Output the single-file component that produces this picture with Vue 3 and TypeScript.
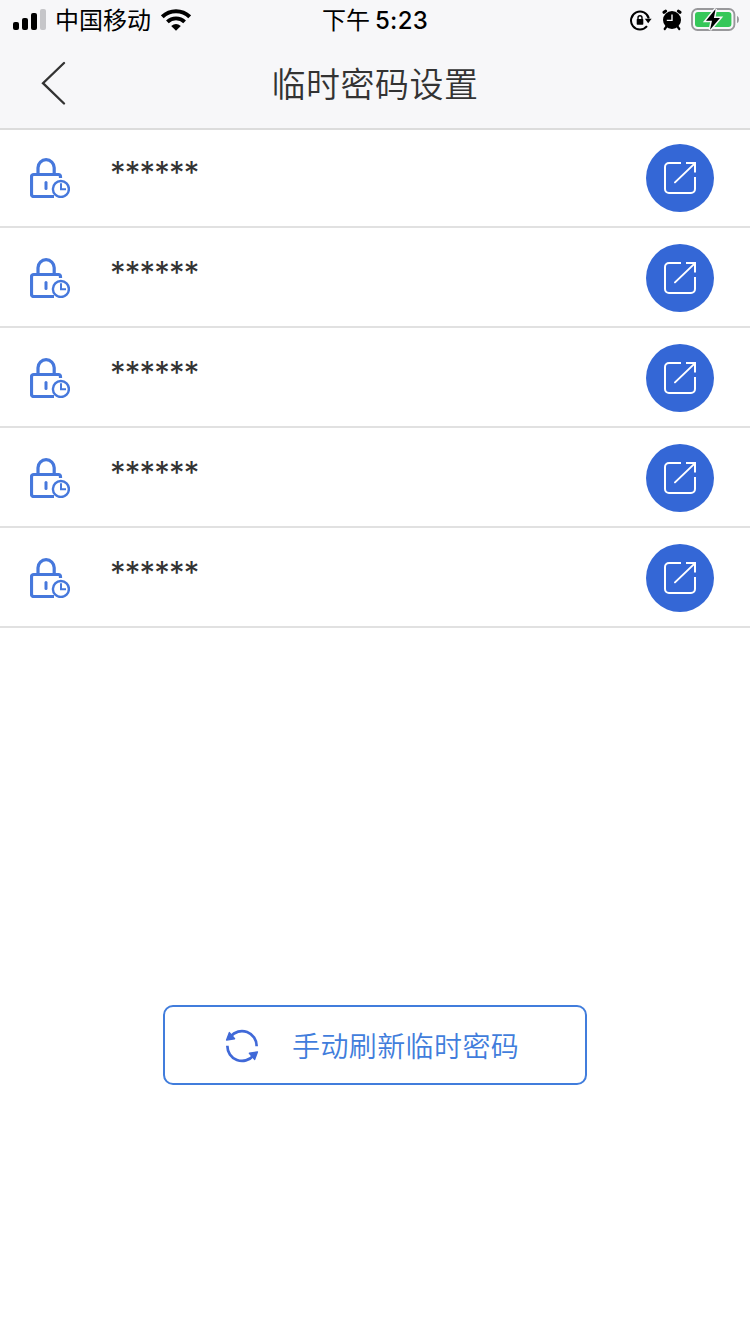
<script setup lang="ts">
interface TempPassword {
  id: number
  mask: string
}

const passwords: TempPassword[] = Array.from({ length: 5 }, (_, i) => ({
  id: i + 1,
  mask: '******',
}))
</script>

<template>
  <main class="screen">
    <header class="top">
      <div class="status">
        <div class="status-left">
          <svg class="signal" width="34" height="22" viewBox="0 0 34 22">
            <rect x="0" y="13" width="6" height="8" rx="2" />
            <rect x="9" y="9" width="6" height="12" rx="2" />
            <rect x="18" y="4" width="6" height="17" rx="2" />
            <rect x="27" y="0" width="6" height="21" rx="2" fill="#c6c6c9" />
          </svg>
          <span class="carrier">中国移动</span>
          <svg class="wifi" width="30" height="22" viewBox="0 0 30 22">
            <path d="M1.3 7.8A19.6 19.6 0 0 1 28.7 7.8" fill="none" stroke="#000" stroke-width="4" />
            <path d="M6.4 12.9A12.2 12.2 0 0 1 23.6 12.9" fill="none" stroke="#000" stroke-width="3.8" />
            <path d="M10.2 17Q15 13.1 19.8 17L15 21.7Z" />
          </svg>
        </div>
        <div class="time"><span class="period">下午</span><span class="clock">5:23</span></div>
        <div class="status-right">
          <svg width="22" height="22" viewBox="0 0 22 22">
            <path d="M17 17.2A9 9 0 1 1 18.8 9.5" fill="none" stroke="#000" stroke-width="2" />
            <path d="M14.8 9.8H21.6L18.2 14.2Z" />
            <rect x="6.7" y="10" width="6.6" height="5.8" rx=".7" />
            <path d="M8 10.5V8.8a2 2 0 0 1 4 0V10.5" fill="none" stroke="#000" stroke-width="1.4" />
          </svg>
          <svg class="alarm" width="20" height="22" viewBox="0 0 20 22">
            <circle cx="10" cy="11" r="9" />
            <path d="M2 3.3L3.6 2.1M18 3.3L16.4 2.1" stroke="#000" stroke-width="3" stroke-linecap="round" />
            <path d="M4.5 17.5L2.7 20M15.5 17.5L17.3 20" stroke="#000" stroke-width="2.2" stroke-linecap="round" />
            <path d="M10 5.4V11.4H4.8" fill="none" stroke="#f7f7f9" stroke-width="1.4" />
          </svg>
          <svg class="battery" width="48" height="24" viewBox="0 0 48 24">
            <rect x="1" y="1" width="42.4" height="21" rx="5.5" fill="none" stroke="#98989b" stroke-width="1.9" />
            <rect x="4" y="4" width="36.4" height="15" rx="3" fill="#35c759" />
            <path d="M46 7.8Q48 9 48 11.5T46 15.2Z" fill="#98989b" />
            <path d="M24.6 1L15 12.7H21L19 21.8L29 10H22.9Z" fill="#000" stroke="#f7f7f9" stroke-width="3" paint-order="stroke" />
          </svg>
        </div>
      </div>
      <nav class="nav">
        <button class="back" aria-label="返回">
          <svg width="26" height="44" viewBox="0 0 26 44">
            <path d="M24 2L3 22.2L24 42.5" fill="none" stroke="#333" stroke-width="2.3" stroke-linecap="round" />
          </svg>
        </button>
        <h1>临时密码设置</h1>
      </nav>
    </header>

    <ul class="list">
      <li v-for="item in passwords" :key="item.id" class="row">
        <svg class="lock" width="40" height="40" viewBox="0 0 40 40" fill="none" stroke="#4678dc" stroke-width="3">
          <path d="M8 16V9.8a8.1 8.1 0 0 1 16.2 0V16" stroke-width="3.2" />
          <path d="M30.5 20V18.7a2.2 2.2 0 0 0-2.2-2.2H3.7a2.2 2.2 0 0 0-2.2 2.2V36.3a2.2 2.2 0 0 0 2.2 2.2H24" stroke-width="3.2" />
          <path d="M16 24.5V30.5" stroke-linecap="round" />
          <circle cx="30.9" cy="31" r="8" stroke-width="2.4" />
          <path d="M31 25.3V31.3H36" stroke-width="2" />
        </svg>
        <span class="mask">{{ item.mask }}</span>
        <button class="share" aria-label="分享">
          <svg width="34" height="34" viewBox="0 0 34 34" fill="none" stroke="#fff" stroke-width="2">
            <path d="M18 2H6a4 4 0 0 0-4 4V28a4 4 0 0 0 4 4H28a4 4 0 0 0 4-4V16" />
            <path d="M23 2H32V11.5" />
            <path d="M31.6 2.6L12 21.4" stroke-linecap="round" />
          </svg>
        </button>
      </li>
    </ul>

    <button class="refresh">
      <svg width="34" height="34" viewBox="0 0 34 34">
        <g fill="none" stroke="#4069d8" stroke-width="2.7">
          <path d="M5.6 7.4A14.7 14.7 0 0 1 31.6 17.2" />
          <path d="M28.4 26.6A14.7 14.7 0 0 1 2.4 16.8" />
        </g>
        <path d="M4.4 3.6L1.6 11.1L9.6 9.7Z" fill="#4069d8" stroke="#4069d8" stroke-width="1.4" stroke-linejoin="round" />
        <path d="M29.6 30.4L32.4 22.9L24.4 24.3Z" fill="#4069d8" stroke="#4069d8" stroke-width="1.4" stroke-linejoin="round" />
      </svg>
      <span>手动刷新临时密码</span>
    </button>
  </main>
</template>

<style>
body {
  margin: 0;
  background: #fff;
}
</style>

<style scoped>
.screen {
  width: 750px;
  height: 1334px;
  overflow: hidden;
  display: flex;
  flex-direction: column;
  background: #fff;
  color: #333;
  font-family: Inter, "Noto Sans CJK SC", sans-serif;
}
button {
  padding: 0;
  border: 0;
  background: none;
  font: inherit;
}
svg {
  display: block;
  flex: none;
}
.top {
  height: 128px;
  background: #f7f7f9;
  box-shadow: 0 2px #dcdcdc;
}
.status {
  height: 40px;
  display: grid;
  grid-template-columns: 1fr auto 1fr;
  align-items: center;
  color: #000;
  font-size: 24px;
  line-height: 38px;
}
.status-left,
.status-right,
.time {
  display: flex;
  align-items: center;
}
.status-left {
  padding-left: 13px;
}
.carrier {
  margin: 0 10px 0 8px;
  padding-top: 2px;
}
.time {
  padding-top: 2px;
}
.period {
  margin-right: 5px;
  font-weight: 400;
}
.clock {
  font-weight: 550;
  letter-spacing: 0.3px;
}
.status-right {
  justify-content: flex-end;
  padding-right: 11px;
}
.alarm {
  margin: 0 9px 0 10px;
}
.nav {
  height: 88px;
  display: grid;
  grid-template-columns: 1fr auto 1fr;
  align-items: center;
}
.back {
  justify-self: start;
  margin: 0 0 2px 40px;
}
h1 {
  margin: 0;
  padding-top: 2px;
  font-size: 34px;
  line-height: 86px;
  font-weight: 350;
  letter-spacing: 0.5px;
}
.list {
  margin: 0;
  padding: 0;
  list-style: none;
}
.row {
  box-sizing: border-box;
  height: 100px;
  padding: 2px 36px 0 30px;
  display: flex;
  align-items: center;
  border-bottom: 2px solid #e1e1e1;
}
.mask {
  flex: 1;
  margin-left: 40px;
  padding-bottom: 11px;
  font-size: 31px;
  line-height: 40px;
  letter-spacing: -0.8px;
}
.share {
  width: 68px;
  height: 68px;
  display: grid;
  place-items: center;
  border-radius: 50%;
  background: #3467d6;
}
.refresh {
  box-sizing: border-box;
  width: 424px;
  height: 80px;
  margin: 377px auto 0;
  padding: 1px 0 0 60px;
  display: flex;
  align-items: center;
  gap: 33px;
  border: 2px solid #417ddc;
  border-radius: 10px;
  color: #417ddc;
  font-size: 28px;
  font-weight: 350;
  letter-spacing: 0.4px;
}
.refresh span {
  margin-top: -2px;
}
</style>
